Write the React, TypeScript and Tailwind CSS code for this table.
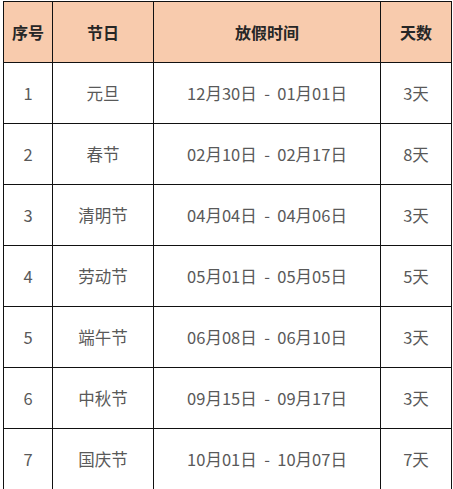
const rows = [
  { id: 1, name: '元旦', range: '12月30日  -  01月01日', days: '3天' },
  { id: 2, name: '春节', range: '02月10日  -  02月17日', days: '8天' },
  { id: 3, name: '清明节', range: '04月04日  -  04月06日', days: '3天' },
  { id: 4, name: '劳动节', range: '05月01日  -  05月05日', days: '5天' },
  { id: 5, name: '端午节', range: '06月08日  -  06月10日', days: '3天' },
  { id: 6, name: '中秋节', range: '09月15日  -  09月17日', days: '3天' },
  { id: 7, name: '国庆节', range: '10月01日  -  10月07日', days: '7天' },
];

export default function App() {
  return (
    <div className="w-[453px] h-[489px] bg-white pl-[3px] pt-[1px] font-['Noto_Sans_CJK_SC',sans-serif]">
      <table className="w-[448px] table-fixed border-collapse">
        <colgroup>
          <col className="w-[49px]" />
          <col className="w-[101px]" />
          <col className="w-[227px]" />
          <col className="w-[71px]" />
        </colgroup>
        <thead>
          <tr className="h-[61px] bg-[#f8cbad] text-[16px] font-bold text-[#262626]">
            <th className="border border-[#111] p-0 text-center">序号</th>
            <th className="border border-[#111] p-0 text-center">节日</th>
            <th className="border border-[#111] p-0 text-center">放假时间</th>
            <th className="border border-[#111] p-0 text-center">天数</th>
          </tr>
        </thead>
        <tbody>
          {rows.map((r) => (
            <tr key={r.id} className="h-[61px] text-[16.5px] text-[#595959]">
              <td className="border border-[#111] p-0 text-center">{r.id}</td>
              <td className="border border-[#111] p-0 text-center">{r.name}</td>
              <td className="border border-[#111] p-0 text-center whitespace-pre">{r.range}</td>
              <td className="border border-[#111] p-0 text-center">{r.days}</td>
            </tr>
          ))}
        </tbody>
      </table>
    </div>
  );
}
